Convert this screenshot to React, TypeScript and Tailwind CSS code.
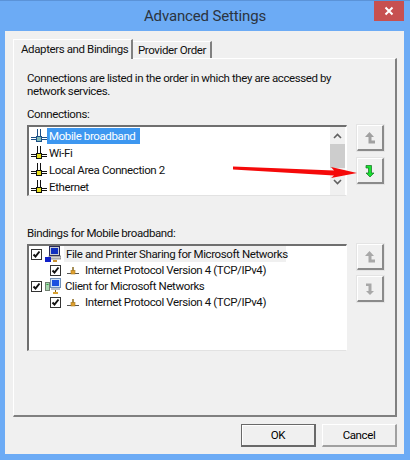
function NetIcon({ selected }: { selected?: boolean }) {
  const line = selected ? "#1c4f86" : "#111111";
  const box = selected ? "#7fb8b8" : "#e8e020";
  return (
    <svg width="16" height="14" viewBox="0 0 16 14" className="shrink-0">
      <path d="M0 8.5h16M0 10.5h16" stroke={line} strokeWidth="1" />
      <path d="M6.5 0v7M9.5 0v7" stroke={line} strokeWidth="1" />
      <rect x="5.5" y="7.5" width="5" height="5" fill={box} stroke={line} />
    </svg>
  );
}

function ProtocolIcon() {
  return (
    <svg width="14" height="10" viewBox="0 0 14 10" className="block shrink-0">
      <path d="M1 8.5h12" stroke="#555555" />
      <path d="M7 2v4" stroke="#8a6a20" strokeWidth="1.5" />
      <rect x="5" y="5.5" width="4" height="3.5" fill="#e0a030" stroke="#a87818" strokeWidth="0.6" />
    </svg>
  );
}

function SharingIcon() {
  return (
    <svg width="16" height="17" viewBox="0 0 16 17" className="shrink-0">
      <rect x="4.5" y="0.5" width="10" height="9" fill="#c8ccd4" stroke="#2a2a55" />
      <rect x="6" y="2" width="7" height="6" fill="#1030c0" />
      <rect x="4" y="10" width="12" height="3" fill="#d0d0d0" stroke="#555555" strokeWidth="0.6" />
      <rect x="0" y="11" width="6" height="5" fill="#1020c8" />
      <rect x="8" y="14" width="4" height="2" fill="#c89030" />
    </svg>
  );
}

function ClientIcon() {
  return (
    <svg width="16" height="17" viewBox="0 0 16 17" className="shrink-0">
      <rect x="0.5" y="4.5" width="4" height="8" fill="#a8d8b0" stroke="#708070" />
      <rect x="1.5" y="6" width="2" height="1" fill="#30a040" />
      <rect x="5.5" y="0.5" width="10" height="9" fill="#cfe4f8" stroke="#7090b8" />
      <rect x="7" y="2" width="7" height="6" fill="#1a50e0" />
      <rect x="6" y="10" width="9" height="2" fill="#b8c0cc" />
      <path d="M10.5 12v2" stroke="#806020" />
      <rect x="8" y="14" width="5" height="2" fill="#d8a030" />
    </svg>
  );
}

function Checkbox() {
  return (
    <span className="w-[11px] h-[11px] shrink-0 border border-[#333333] bg-white flex items-center justify-center">
      <svg width="9" height="9" viewBox="0 0 9 9">
        <path d="M1.5 4.5l2 2 4-5" fill="none" stroke="#111111" strokeWidth="2" />
      </svg>
    </span>
  );
}

function MoveButton({ dir, color }: { dir: "up" | "down"; color: string }) {
  return (
    <div className="w-[27px] h-[26px] flex items-center justify-center bg-[#f0f0f0] border-t border-l border-white border-r-2 border-b-2 border-r-[#8a8a8a] border-b-[#8a8a8a] shadow-[0_0_0_1px_#e4e4e4]">
      <svg width="10" height="12" viewBox="0 0 10 12">
        {dir === "up" ? (
          <path d="M4.5 0L9 5H6.5V8.5H10V11.5H3.5V5H0Z" fill={color} />
        ) : (
          <path d="M1 0.5H6.5V8H9L5 12L1 8H3.5V3H1Z" fill={color} stroke={color === "#18e030" ? "#107020" : "none"} strokeWidth="0.7" />
        )}
      </svg>
    </div>
  );
}

function DialogButton({ label, primary }: { label: string; primary?: boolean }) {
  return (
    <div
      className={
        primary
          ? "w-[75px] h-[23px] flex items-center justify-center text-black border border-[#696969] border-r-2 border-b-2 shadow-[inset_1px_1px_0_#ffffff]"
          : "w-[75px] h-[23px] flex items-center justify-center text-black border border-white border-r-2 border-b-2 border-r-[#a0a0a0] border-b-[#a0a0a0]"
      }
    >
      {label}
    </div>
  );
}

const connections = ["Mobile broadband", "Wi-Fi", "Local Area Connection 2", "Ethernet"];

export default function App() {
  return (
    <div
      className="relative w-[410px] h-[460px] overflow-hidden whitespace-nowrap bg-[#6cabf5] border-t border-[#5b93d8] text-[11.5px] tracking-[-0.39px] leading-[16px] text-[#111111]"
      style={{ fontFamily: 'Roboto, "Noto Sans", sans-serif' }}
    >
      <div className="h-[30px] flex items-center justify-center text-[15px] tracking-[-0.15px] text-[#2b3440]">Advanced Settings</div>
      <div className="absolute right-[6px] top-0 w-[30px] h-[20px] bg-[#c75050] flex items-center justify-center">
        <svg width="10" height="10" viewBox="0 0 10 10">
          <path d="M1.5 1.5l7 7M8.5 1.5l-7 7" stroke="#ffffff" strokeWidth="2" />
        </svg>
      </div>

      <div className="ml-[5px] w-[399px] h-[423px] bg-[#f0f0f0] px-[8px] pt-[8px]">
        <div className="flex items-end h-[19px] relative z-10">
          <div className="w-[120px] h-[20px] -mb-px bg-[#f0f0f0] border-t border-l border-white border-r-2 border-r-[#808080] flex items-center pl-[7px] pb-[2px]">
            Adapters and Bindings
          </div>
          <div className="w-[79px] h-[17px] border-t border-white border-r-2 border-r-[#808080] flex items-center pl-[5px]">
            Provider Order
          </div>
        </div>

        <div className="w-[384px] h-[359px] border-t border-l border-white border-r-2 border-b-2 border-r-[#808080] border-b-[#808080] pl-[13px] pr-[10px] pt-[11px]">
          <p>Connections are listed in the order in which they are accessed by</p>
          <p className="-mt-[3px]">network services.</p>
          <p className="mt-[7px]">Connections:</p>

          <div className="mt-[3px] flex gap-[10px]">
            <div className="w-[320px] h-[71px] bg-white border-t-2 border-l-2 border-[#6f6f6f] border-r border-r-white border-b border-b-[#e2e2e2] flex overflow-hidden">
              <div className="flex-1 pl-[2px]">
                {connections.map((name, i) => (
                  <div key={name} className="h-[17px] flex items-center">
                    <NetIcon selected={i === 0} />
                    <span className={i === 0 ? "px-[2px] w-[93px] bg-[#3d97f0] text-white" : "px-[2px]"}>{name}</span>
                  </div>
                ))}
              </div>
              <div className="w-[15px] mr-[1px] flex flex-col bg-[#f0f0f0]">
                <div className="h-[17px] flex items-center justify-center">
                  <svg width="9" height="6" viewBox="0 0 9 6">
                    <path d="M1 5l3.5-3.5L8 5" fill="none" stroke="#606060" strokeWidth="1.6" />
                  </svg>
                </div>
                <div className="h-[24px] bg-[#cdcdcd]" />
                <div className="flex-1 flex items-center justify-center">
                  <svg width="9" height="6" viewBox="0 0 9 6">
                    <path d="M1 1l3.5 3.5L8 1" fill="none" stroke="#606060" strokeWidth="1.6" />
                  </svg>
                </div>
              </div>
            </div>
            <div className="flex flex-col gap-[7px]">
              <MoveButton dir="up" color="#a0a0a0" />
              <MoveButton dir="down" color="#18e030" />
            </div>
          </div>

          <p className="mt-[29px]">Bindings for Mobile broadband:</p>

          <div className="mt-[3px] flex gap-[10px]">
            <div className="w-[320px] h-[107px] bg-white border-t-2 border-l-2 border-[#6f6f6f] border-r border-r-white border-b border-b-[#e2e2e2] pl-[2px]">
              <div className="h-[16px] flex items-center gap-[3px]">
                <Checkbox />
                <SharingIcon />
                <span className="w-[222px] bg-[#f0f0f0] pl-[2px]">File and Printer Sharing for Microsoft Networks</span>
              </div>
              <div className="h-[16px] flex items-center pl-[19px]">
                <Checkbox />
                <span className="ml-[5px]"><ProtocolIcon /></span>
                <span className="ml-[5px]">Internet Protocol Version 4 (TCP/IPv4)</span>
              </div>
              <div className="h-[16px] flex items-center gap-[3px]">
                <Checkbox />
                <ClientIcon />
                <span className="pl-[1px]">Client for Microsoft Networks</span>
              </div>
              <div className="h-[16px] flex items-center pl-[19px]">
                <Checkbox />
                <span className="ml-[5px]"><ProtocolIcon /></span>
                <span className="ml-[5px]">Internet Protocol Version 4 (TCP/IPv4)</span>
              </div>
            </div>
            <div className="flex flex-col gap-[6px]">
              <MoveButton dir="up" color="#a8a8a8" />
              <MoveButton dir="down" color="#a8a8a8" />
            </div>
          </div>
        </div>

        <div className="mt-[7px] w-[384px] flex justify-end gap-[6px]">
          <DialogButton label="OK" primary />
          <DialogButton label="Cancel" />
        </div>
      </div>

      {/* red annotation arrow, drawn over the dialog */}
      <svg className="absolute left-[230px] top-[160px]" width="130" height="20" viewBox="0 0 130 20">
        <path d="M3 5.5L104 9.5L101 6L127 12L101 17L104 14.5L3 8.5Z" fill="#f50a0a" />
      </svg>
    </div>
  );
}
